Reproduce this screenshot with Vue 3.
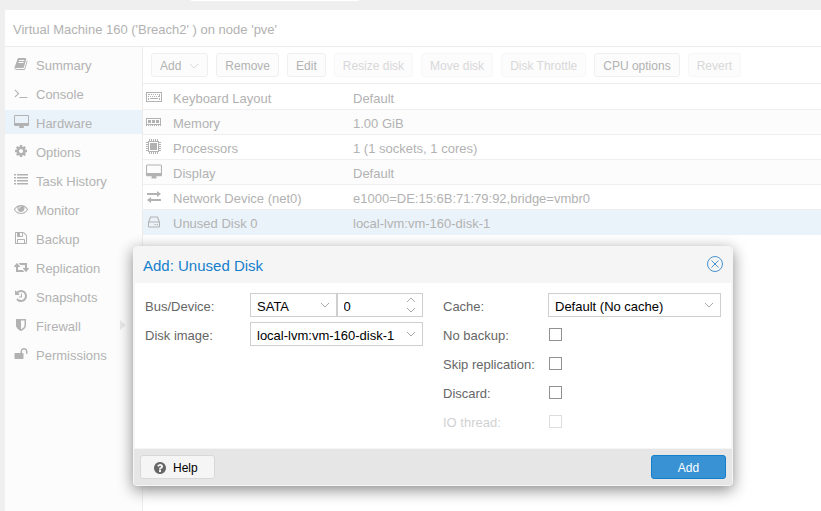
<script setup>
import { ref } from 'vue'

const em = '0 0 1792 1792'
const wide = '-64 0 1920 1792'
const desktop = 'M1728 992v-832q0-13-9.5-22.5t-22.5-9.5h-1600q-13 0-22.5 9.5t-9.5 22.5v832q0 13 9.5 22.5t22.5 9.5h1600q13 0 22.5-9.5t9.5-22.5zm128-832v1088q0 66-47 113t-113 47h-544q0 37 16 77.5t32 71 16 43.5q0 26-19 45t-45 19h-512q-26 0-45-19t-19-45q0-14 16-44t32-70 16-78h-544q-66 0-113-47t-47-113v-1088q0-66 47-113t113-47h1600q66 0 113 47t47 113z'

const menu = [
  { label: 'Summary', box: em, d: 'M1703 478q40 57 18 129l-275 906q-19 64-76.5 107.5t-122.5 43.5h-923q-77 0-148.5-53.5t-99.5-131.5q-24-67-2-127 0-4 3-27t4-37q1-8-3-21.5t-3-19.5q2-11 8-21t16.5-23.5 16.5-23.5q23-38 45-91.5t30-91.5q3-10 .5-30t-.5-28q3-11 17-28t17-23q21-36 42-92t25-90q1-9-2.5-32t.5-28q4-13 22-30.5t22-22.5q19-26 42.5-84.5t27.5-96.5q1-8-3-25.5t-2-26.5q2-8 9-18t18-23 17-21q8-12 16.5-30.5t15-35 16-36 19.5-32 26.5-23.5 36-11.5 47.5 5.5l-1 3q38-9 51-9h761q74 0 114 56t18 130l-274 906q-36 119-71.5 153.5t-128.5 34.5h-869q-27 0-38 15-11 16-1 43 24 70 144 70h923q29 0 56-15.5t35-41.5l300-987q7-22 5-57 38 15 59 43zm-1064 2q-4 13 2 22.5t20 9.5h608q13 0 25.5-9.5t16.5-22.5l21-64q4-13-2-22.5t-20-9.5h-608q-13 0-25.5 9.5t-16.5 22.5zm-83 256q-4 13 2 22.5t20 9.5h608q13 0 25.5-9.5t16.5-22.5l21-64q4-13-2-22.5t-20-9.5h-608q-13 0-25.5 9.5t-16.5 22.5z' },
  { label: 'Console', box: em, d: 'M649 983l-466 466q-10 10-23 10t-23-10l-50-50q-10-10-10-23t10-23l393-393-393-393q-10-10-10-23t10-23l50-50q10-10 23-10t23 10l466 466q10 10 10 23t-10 23zm1079 457v64q0 14-9 23t-23 9h-960q-14 0-23-9t-9-23v-64q0-14 9-23t23-9h960q14 0 23 9t9 23z' },
  { label: 'Hardware', box: wide, d: desktop, active: true },
  { label: 'Options', box: em, d: 'M1152 896q0-106-75-181t-181-75-181 75-75 181 75 181 181 75 181-75 75-181zm512-109v222q0 12-8 23t-20 13l-185 28q-19 54-39 91 35 50 107 138 10 12 10 25t-9 23q-27 37-99 108t-94 71q-12 0-26-9l-138-108q-44 23-91 38-16 136-29 186-7 28-36 28h-222q-14 0-24.5-8.5t-11.5-21.5l-28-184q-49-16-90-37l-141 107q-10 9-25 9-14 0-25-11-126-114-165-168-7-10-7-23 0-12 8-23 15-21 51-66.5t54-70.5q-27-50-41-99l-183-27q-13-2-21-12.5t-8-23.5v-222q0-12 8-23t19-13l186-28q14-46 39-92-40-57-107-138-10-12-10-24 0-10 9-23 26-36 98.5-107.5t94.5-71.5q13 0 26 10l138 107q44-23 91-38 16-136 29-186 7-28 36-28h222q14 0 24.5 8.5t11.5 21.5l28 184q49 16 90 37l142-107q9-9 24-9 13 0 25 10 129 119 165 170 7 8 7 22 0 12-8 23-15 21-51 66.5t-54 70.5q26 50 41 98l183 28q13 2 21 12.5t8 23.5z' },
  { label: 'Task History', box: em, d: 'M0 128h256v192h-256zM384 128h1408v192h-1408zM0 512h256v192h-256zM384 512h1408v192h-1408zM0 896h256v192h-256zM384 896h1408v192h-1408zM0 1280h256v192h-256zM384 1280h1408v192h-1408z' },
  { label: 'Monitor', box: em, d: 'M1664 960q-152-236-381-353 61 104 61 225 0 185-131.5 316.5t-316.5 131.5-316.5-131.5-131.5-316.5q0-121 61-225-229 117-381 353 133 205 333.5 326.5t434.5 121.5 434.5-121.5 333.5-326.5zm-720-384q0-20-14-34t-34-14q-125 0-214.5 89.5t-89.5 214.5q0 20 14 34t34 14 34-14 14-34q0-86 61-147t147-61q20 0 34-14t14-34zm848 384q0 34-20 69-140 230-376.5 368.5t-499.5 138.5-499.5-139-376.5-368q-20-35-20-69t20-69q140-229 376.5-368t499.5-139 499.5 139 376.5 368q20 35 20 69z' },
  { label: 'Backup', box: em, d: 'M512 1536h768v-384h-768v384zm896 0h128v-896q0-14-10-38.5t-20-34.5l-281-281q-10-10-34-20t-39-10v416q0 40-28 68t-68 28h-576q-40 0-68-28t-28-68v-416h-128v1280h128v-416q0-40 28-68t68-28h832q40 0 68 28t28 68v416zm-384-928v-320q0-13-9.5-22.5t-22.5-9.5h-192q-13 0-22.5 9.5t-9.5 22.5v320q0 13 9.5 22.5t22.5 9.5h192q13 0 22.5-9.5t9.5-22.5zm640 32v928q0 40-28 68t-68 28h-1344q-40 0-68-28t-28-68v-1344q0-40 28-68t68-28h928q40 0 88 20t76 48l280 280q28 28 48 76t20 88z' },
  { label: 'Replication', box: wide, d: 'M1216 1504q0 13-9.5 22.5t-22.5 9.5h-960q-8 0-13.5-2t-9-7-5.5-8-3-11.5-1-11.5v-600h-192q-26 0-45-19t-19-45q0-24 15-41l320-384q19-22 49-22t49 22l320 384q15 17 15 41 0 26-19 45t-45 19h-192v384h576q16 0 25 11l160 192q7 10 7 21zm640-416q0 24-15 41l-320 384q-20 23-49 23t-49-23l-320-384q-15-17-15-41 0-26 19-45t45-19h192v-384h-576q-16 0-25-12l-160-192q-7-9-7-20 0-13 9.5-22.5t22.5-9.5h960q8 0 13.5 2t9 7 5.5 8 3 11.5 1 11.5v600h192q26 0 45 19t19 45z' },
  { label: 'Snapshots', box: em, d: 'M1664 896q0 156-61 298t-164 245-245 164-298 61q-172 0-327-72.5t-264-204.5q-7-10-6.5-22.5t8.5-20.5l137-138q10-9 25-9 16 2 23 12 73 95 179 147t225 52q104 0 198.5-40.5t163.5-109.5 109.5-163.5 40.5-198.5-40.5-198.5-109.5-163.5-163.5-109.5-198.5-40.5q-98 0-188 35.5t-160 101.5l137 138q31 30 14 69-17 40-59 40h-448q-26 0-45-19t-19-45v-448q0-42 40-59 39-17 69 14l130 129q107-101 244.5-156.5t284.5-55.5q156 0 298 61t245 164 164 245 61 298zM1024 608v448q0 14-9 23t-23 9h-320q-14 0-23-9t-9-23v-64q0-14 9-23t23-9h224v-352q0-14 9-23t23-9h64q14 0 23 9t9 23z' },
  { label: 'Firewall', box: em, more: true, d: 'M1344 960v-640h-448v1137q119-63 213-137 235-184 235-360zm192-768v768q0 86-33.5 170.5t-83 150-118 127.5-126.5 103-121 77.5-89.5 49.5-42.5 20q-12 6-26 6t-26-6q-16-7-42.5-20t-89.5-49.5-121-77.5-126.5-103-118-127.5-83-150-33.5-170.5v-768q0-26 19-45t45-19h1152q26 0 45 19t19 45z' },
  { label: 'Permissions', box: em, d: 'M1728 576v256q0 26-19 45t-45 19h-64q-26 0-45-19t-19-45v-256q0-106-75-181t-181-75-181 75-75 181v192h96q40 0 68 28t28 68v576q0 40-28 68t-68 28h-960q-40 0-68-28t-28-68v-576q0-40 28-68t68-28h672v-192q0-185 131.5-316.5t316.5-131.5 316.5 131.5 131.5 316.5z' },
]

const actions = [
  { label: 'Add', menu: true },
  { label: 'Remove' },
  { label: 'Edit' },
  { label: 'Resize disk', disabled: true },
  { label: 'Move disk', disabled: true },
  { label: 'Disk Throttle', disabled: true },
  { label: 'CPU options' },
  { label: 'Revert', disabled: true },
]

const hardware = [
  { name: 'Keyboard Layout', value: 'Default', box: '0 0 16 16', d: 'M0 3h16v10H0zM1 4v8h14V4zM2 5h2v1H2zM5 5h1v1H5zM7 5h1v1H7zM9 5h1v1H9zM11 5h1v1h-1zM13 5h1v3h-2V7h1zM2 7h1v1H2zM4 7h1v1H4zM6 7h1v1H6zM8 7h1v1H8zM10 7h1v1h-1zM2 9h1v2H2zM4 9h8v1H4zM13 9h1v2h-1z' },
  { name: 'Memory', value: '1.00 GiB', box: '0 0 16 16', d: 'M0 4h15v7H0zM1 5v5h13V5zM2 6h3v3H2zM6 6h3v3H6zM10 6h3v3h-3zM0 11h1v1H0zM2 11h1v1H2zM4 11h1v1H4zM6 11h1v1H6zM8 11h1v1H8zM10 11h1v1h-1zM12 11h1v1h-1zM14 11h1v1h-1z' },
  { name: 'Processors', value: '1 (1 sockets, 1 cores)', box: '0 0 16 16', d: 'M2 2h11v11H2zM3 3v9h9V3zM4 4h7v7H4zM3 0h1v2H3zM5 0h1v2H5zM7 0h1v2H7zM9 0h1v2H9zM11 0h1v2h-1zM3 13h1v2H3zM5 13h1v2H5zM7 13h1v2H7zM9 13h1v2H9zM11 13h1v2h-1zM0 3h2v1H0zM0 5h2v1H0zM0 7h2v1H0zM0 9h2v1H0zM0 11h2v1H0zM13 3h2v1h-2zM13 5h2v1h-2zM13 7h2v1h-2zM13 9h2v1h-2zM13 11h2v1h-2z' },
  { name: 'Display', value: 'Default', box: wide, d: desktop },
  { name: 'Network Device (net0)', value: 'e1000=DE:15:6B:71:79:92,bridge=vmbr0', box: '0 0 16 16', d: 'M1 4h10V2l4 3-4 3V6H1zM15 10H5V8l-4 3 4 3v-2h10z' },
  { name: 'Unused Disk 0', value: 'local-lvm:vm-160-disk-1', active: true, box: '0 0 16 16', d: 'M4.200 2.500h7.600l2.200 5.500v4.500q0 1-1 1H3q-1 0-1-1V8zM5 3.500L3.400 7.500h9.200L11 3.500zM3 8.500v4h10v-4zM8.500 10h1.200v1.200H8.500zM10.800 10H12v1.200h-1.200z' },
]

const bus = ref('SATA')
const device = ref('0')
const image = ref('local-lvm:vm-160-disk-1')
const cache = ref('Default (No cache)')
const options = ref([
  { id: 'backup', label: 'No backup:', on: false },
  { id: 'replication', label: 'Skip replication:', on: false },
  { id: 'discard', label: 'Discard:', on: false },
  { id: 'iothread', label: 'IO thread:', on: false, disabled: true },
])
</script>

<template>
  <div class="page">
    <div class="strip"><span class="strip-tab"></span></div>
    <main class="panel">
      <h1 class="title">Virtual Machine 160 ('Breach2' ) on node 'pve'</h1>
      <div class="split">
        <nav class="side">
          <a v-for="m in menu" :key="m.label" href="#" class="side-item" :class="{ active: m.active }">
            <span class="side-icon"><svg :viewBox="m.box" height="14"><path fill-rule="evenodd" :d="m.d" /></svg></span>
            <span class="side-text">{{ m.label }}</span>
            <svg v-if="m.more" class="side-more" viewBox="0 0 6 10" width="6" height="10"><path d="M0 0l6 5-6 5z" /></svg>
          </a>
        </nav>
        <section class="content">
          <div class="toolbar">
            <button v-for="a in actions" :key="a.label" type="button" class="tool" :disabled="a.disabled">
              {{ a.label }}
              <svg v-if="a.menu" class="tool-arrow" viewBox="0 0 10 6" width="10" height="6"><path d="M1 1l4 4 4-4" /></svg>
            </button>
          </div>
          <table class="grid">
            <tbody>
              <tr v-for="h in hardware" :key="h.name" :class="{ active: h.active }">
                <td class="cell-icon"><svg :viewBox="h.box" width="16" height="16"><path fill-rule="evenodd" :d="h.d" /></svg></td>
                <td class="cell-name">{{ h.name }}</td>
                <td>{{ h.value }}</td>
              </tr>
            </tbody>
          </table>
        </section>
      </div>
    </main>

    <div class="dialog" role="dialog" aria-labelledby="dialog-title">
      <header class="dialog-head">
        <h2 id="dialog-title">Add: Unused Disk</h2>
        <button type="button" class="close" aria-label="Close">
          <svg viewBox="0 0 16 16" width="16" height="16"><circle cx="8" cy="8" r="7.500" /><path d="M4.500 4.500l7 7M11.500 4.500l-7 7" /></svg>
        </button>
      </header>
      <form class="dialog-body" @submit.prevent>
        <div class="column">
          <div class="row">
            <label for="bus">Bus/Device:</label>
            <div class="pair">
              <div class="field">
                <select id="bus" v-model="bus"><option>SATA</option></select>
                <svg class="arrow" viewBox="0 0 10 6" width="10" height="6"><path d="M1 1l4 4 4-4" /></svg>
              </div>
              <div class="field">
                <input id="device" v-model="device" type="text" aria-label="Device number" />
                <svg class="arrow" viewBox="0 0 10 16" width="10" height="16"><path d="M1 5l4-4 4 4M1 11l4 4 4-4" /></svg>
              </div>
            </div>
          </div>
          <div class="row">
            <label for="image">Disk image:</label>
            <div class="field">
              <select id="image" v-model="image"><option>local-lvm:vm-160-disk-1</option></select>
              <svg class="arrow" viewBox="0 0 10 6" width="10" height="6"><path d="M1 1l4 4 4-4" /></svg>
            </div>
          </div>
        </div>
        <div class="column">
          <div class="row">
            <label for="cache">Cache:</label>
            <div class="field">
              <select id="cache" v-model="cache"><option>Default (No cache)</option></select>
              <svg class="arrow" viewBox="0 0 10 6" width="10" height="6"><path d="M1 1l4 4 4-4" /></svg>
            </div>
          </div>
          <div v-for="o in options" :key="o.id" class="row" :class="{ off: o.disabled }">
            <label :for="o.id">{{ o.label }}</label>
            <input :id="o.id" v-model="o.on" type="checkbox" class="check" :disabled="o.disabled" />
          </div>
        </div>
      </form>
      <footer class="dialog-foot">
        <button type="button" class="btn help">
          <svg viewBox="0 0 1792 1792" width="14" height="14"><path d="M1024 1376v-192q0-14-9-23t-23-9h-192q-14 0-23 9t-9 23v192q0 14 9 23t23 9h192q14 0 23-9t9-23zm256-672q0-88-55.500-163t-138.500-116-170-41q-243 0-371 213-15 24 8 42l132 100q7 6 19 6 16 0 25-12 53-68 86-92 34-24 86-24 48 0 85.500 26t37.500 59q0 38-20 61t-68 45q-63 28-115.500 86.500t-52.500 125.500v36q0 14 9 23t23 9h192q14 0 23-9t9-23q0-19 21.500-49.500t54.500-49.500q32-18 49-28.500t46-35 44.500-48 28-60.500 12.500-81zm384 192q0 209-103 385.500t-279.500 279.500-385.500 103-385.500-103-279.500-279.500-103-385.500 103-385.500 279.500-279.500 385.500-103 385.500 103 279.500 279.500 103 385.500z" /></svg>
          Help
        </button>
        <button type="button" class="btn primary">Add</button>
      </footer>
    </div>
  </div>
</template>

<style>
body {
  margin: 0;
  background: #efefef;
}
</style>

<style scoped>
.page {
  position: relative;
  display: flex;
  flex-direction: column;
  min-height: 100vh;
  font: 13px/16px "Liberation Sans", Arial, sans-serif;
  color: #b2b2b2;
}
.page * {
  box-sizing: border-box;
}
button,
input,
select {
  font: inherit;
  margin: 0;
}
svg {
  display: block;
  fill: currentColor;
}
.strip {
  height: 10px;
  padding-left: 191px;
}
.strip-tab {
  display: block;
  width: 168px;
  height: 1px;
  background: #fff;
}
.panel {
  flex: 1;
  display: flex;
  flex-direction: column;
  margin-left: 5px;
  background: #fff;
}
.title {
  margin: 0;
  padding: 12px 8px 8px;
  border-bottom: 1px solid #ececec;
  font-size: 13px;
  font-weight: normal;
  line-height: 16px;
}
.split {
  flex: 1;
  display: flex;
}
.side {
  display: flex;
  flex-direction: column;
  gap: 5px;
  width: 138px;
  padding-top: 5px;
  background: #fcfcfc;
  border-right: 1px solid #ececec;
}
.side-item {
  display: flex;
  align-items: center;
  gap: 7px;
  height: 24px;
  padding: 0 16px 0 8px;
  color: inherit;
  text-decoration: none;
}
.side-item.active {
  background: #ebf3fa;
}
.side-icon {
  display: flex;
  align-items: center;
  justify-content: center;
  width: 16px;
  height: 16px;
}
.side-text {
  padding-top: 4px;
}
.side-more {
  margin-left: auto;
  color: #e8e8e8;
}
.content {
  flex: 1;
  min-width: 0;
}
.toolbar {
  display: flex;
  gap: 8px;
  padding: 6px 8px;
  border-bottom: 1px solid #ececec;
}
.tool {
  display: flex;
  align-items: center;
  gap: 8px;
  height: 24px;
  padding: 1px 8px 0;
  border: 1px solid #efefef;
  border-radius: 3px;
  background: #fcfcfc;
  color: #b2b2b2;
  font-size: 12px;
  white-space: nowrap;
}
.tool:disabled {
  border-color: #f7f7f7;
  color: #d8d8d8;
}
.tool-arrow,
.arrow {
  fill: none;
  stroke: #dcdcdc;
}
.grid {
  width: 100%;
  margin-top: 1px;
  border-collapse: separate;
  border-spacing: 0;
}
.grid tr:nth-child(even) {
  background: #fcfcfc;
}
.grid tr.active {
  background: #ebf3fa;
}
.grid td {
  height: 25px;
  padding: 3px 0 0;
  border-bottom: 1px solid #efefef;
}
.grid .active td {
  border-bottom-color: #ebf3fa;
}
.grid .cell-icon {
  width: 30px;
  padding: 0 0 0 3px;
}
.grid .cell-name {
  width: 180px;
}
.dialog {
  position: absolute;
  left: 133px;
  top: 246px;
  width: 600px;
  border: 1px solid #f5f5f5;
  border-radius: 4px;
  background: #f5f5f5;
  box-shadow: 0 4px 15px #888;
  color: #666;
}
.dialog-head {
  display: flex;
  align-items: center;
  justify-content: space-between;
  height: 36px;
  padding: 0 9px;
}
.dialog-head h2 {
  margin: 0;
  padding-top: 2px;
  color: #157fcc;
  font-size: 15px;
  font-weight: normal;
}
.close {
  padding: 0 0 2px;
  border: 0;
  background: none;
}
.close svg {
  fill: none;
  stroke: #4b92cc;
}
.dialog-body {
  display: grid;
  grid-template-columns: 1fr 1fr;
  gap: 20px;
  margin: 0 1px 1px;
  padding: 10px 10px 15px;
  background: #fff;
}
.column {
  display: flex;
  flex-direction: column;
  gap: 5px;
}
.row {
  display: grid;
  grid-template-columns: 105px 1fr;
  align-items: center;
  height: 24px;
}
.row label {
  padding-top: 4px;
}
.off {
  opacity: 0.3;
}
.pair {
  display: grid;
  grid-template-columns: 1fr 1fr;
}
.field {
  display: grid;
  align-items: center;
}
.field > * {
  grid-area: 1 / 1;
}
.field select,
.field input {
  width: 100%;
  min-width: 0;
  height: 24px;
  padding: 2px 6px 0;
  border: 1px solid #cfcfcf;
  border-radius: 0;
  background: #fff;
  color: #000;
  appearance: none;
}
.field select {
  padding-top: 4px;
}
.arrow {
  justify-self: end;
  margin-right: 7px;
  stroke: #a8a8a8;
  pointer-events: none;
}
.check {
  width: 13px;
  height: 13px;
  margin-left: 1px;
  border: 1px solid #919191;
  background: #fff;
  appearance: none;
}
.check:checked {
  background: #157fcc;
}
.dialog-foot {
  display: flex;
  justify-content: space-between;
  padding: 6px;
  border-radius: 0 0 3px 3px;
  background: #e6e6e6;
}
.btn {
  display: flex;
  align-items: center;
  justify-content: center;
  gap: 6px;
  width: 75px;
  height: 24px;
  padding: 1px 0 0;
  border: 1px solid #d8d8d8;
  border-radius: 3px;
  background: #f5f5f5;
  color: #000;
  font-size: 12px;
}
.help {
  justify-content: flex-start;
  padding-left: 12px;
}
.btn svg {
  color: #666;
}
.primary {
  border-color: #157fcc;
  background: #3892d4;
  color: #fff;
}
</style>
